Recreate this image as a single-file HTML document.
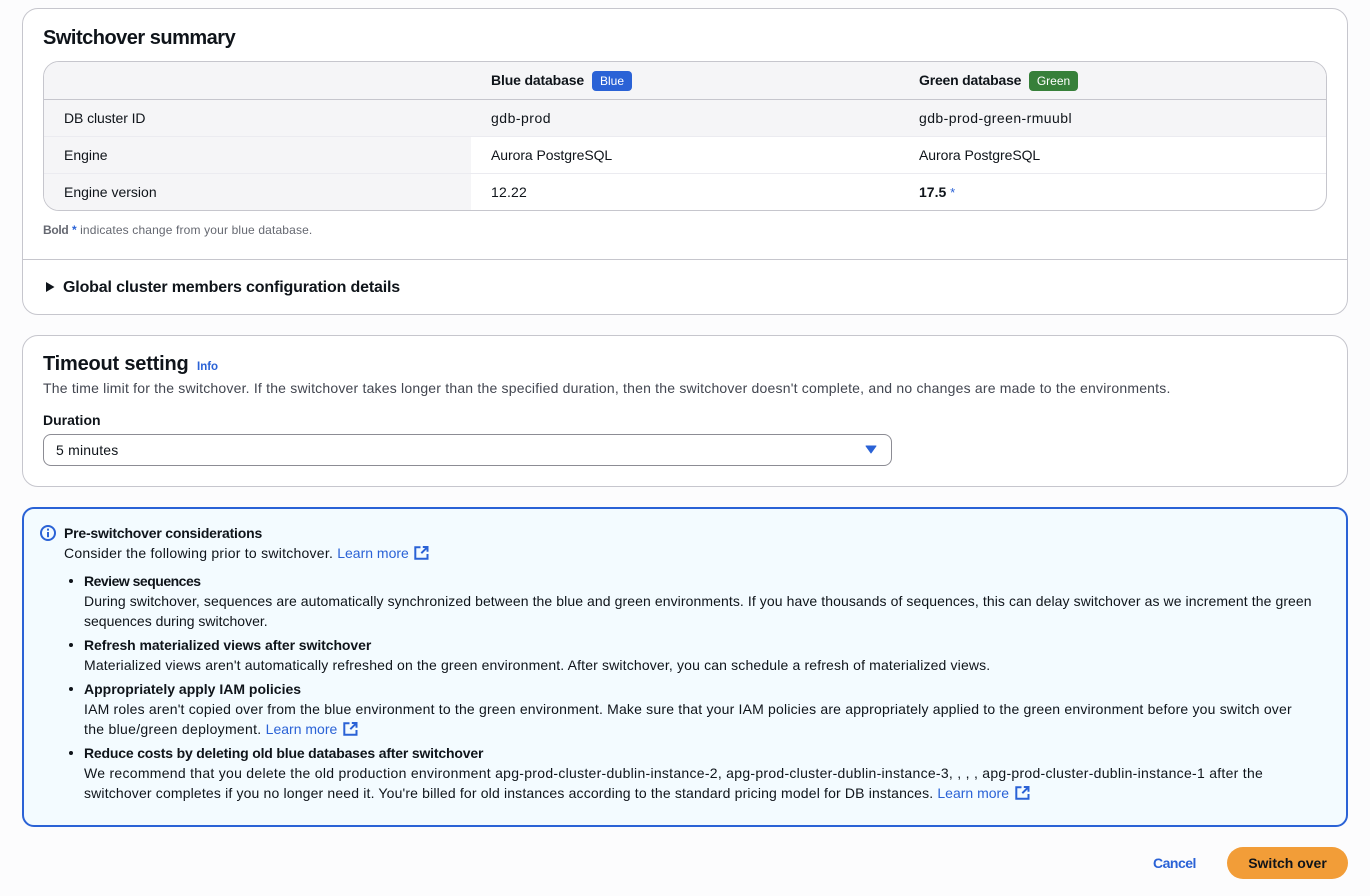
<!DOCTYPE html>
<html lang="en"><head><meta charset="utf-8"><title>Switchover</title>
<style>
html,body{margin:0;padding:0;width:1370px;height:896px;overflow:hidden;background:#fcfcfd}
body{position:relative;font-family:"Liberation Sans",sans-serif;font-size:14px;color:#0f141a}
.a{position:absolute}
.t{position:absolute;white-space:nowrap;line-height:20px}
b{font-weight:700}
.l{color:#2a62d6;letter-spacing:0}
.card{position:absolute;box-sizing:border-box;background:#fff;border:1px solid #c6c6cd;border-radius:16px}
.dot{position:absolute;width:4px;height:4px;border-radius:50%;background:#0f141a;left:69px}
svg{position:absolute}
</style></head><body>

<div class="card" style="left:22px;top:8px;width:1326px;height:307px"></div>
<div class="t" style="left:43px;top:26px;font-size:20px;line-height:24px;font-weight:700;letter-spacing:-.5px">Switchover summary</div>

<div class="a" style="left:43px;top:61px;width:1284px;height:150px;box-sizing:border-box;border:1px solid #c6c6cd;border-radius:16px;overflow:hidden;background:#fff">
  <div class="a" style="left:0;top:0;width:1283px;height:37px;background:#f5f5f7;border-bottom:1px solid #c6c6cd"></div>
  <div class="a" style="left:0;top:38px;width:1283px;height:36px;background:#f5f5f7;border-bottom:1px solid #ebebf0"></div>
  <div class="a" style="left:0;top:75px;width:427px;height:74px;background:#f5f5f7"></div>
  <div class="a" style="left:427px;top:111px;width:857px;height:1px;background:#ebebf0"></div>
  <div class="a" style="left:0;top:111px;width:427px;height:1px;background:#ebebf0"></div>
</div>

<div class="t" style="left:491px;top:70px;font-weight:700;letter-spacing:-.15px">Blue database</div>
<div class="a" style="left:592px;top:71px;width:40px;height:20px;border-radius:4px;background:#2a62d6;color:#fff;font-size:12px;line-height:20px;text-align:center;font-weight:400">Blue</div>
<div class="t" style="left:919px;top:70px;font-weight:700;letter-spacing:-.2px">Green database</div>
<div class="a" style="left:1029px;top:71px;width:49px;height:20px;border-radius:4px;background:#37803a;color:#fff;font-size:12px;line-height:20px;text-align:center">Green</div>

<div class="t" style="left:64px;top:108px;letter-spacing:-.08px">DB cluster ID</div>
<div class="t" style="left:491px;top:108px;letter-spacing:.5px">gdb-prod</div>
<div class="t" style="left:919px;top:108px;letter-spacing:.43px">gdb-prod-green-rmuubl</div>
<div class="t" style="left:64px;top:145px">Engine</div>
<div class="t" style="left:491px;top:145px;letter-spacing:-.06px">Aurora PostgreSQL</div>
<div class="t" style="left:919px;top:145px;letter-spacing:-.06px">Aurora PostgreSQL</div>
<div class="t" style="left:64px;top:182px">Engine version</div>
<div class="t" style="left:491px;top:182px;letter-spacing:.2px">12.22</div>
<div class="t" style="left:919px;top:182px"><b>17.5</b> <span class="l" style="font-size:13px">*</span></div>

<div class="t" style="left:43px;top:220px;font-size:12px;color:#656871;letter-spacing:.15px"><b style="letter-spacing:-.3px">Bold</b> <b class="l">*</b> indicates change from your blue database.</div>

<div class="a" style="left:23px;top:259px;width:1324px;height:1px;background:#c6c6cd"></div>
<svg style="left:46px;top:282px" width="9" height="10" viewBox="0 0 9 10"><path d="M0 0L8.5 5L0 10Z" fill="#0f141a"/></svg>
<div class="t" style="left:63px;top:278px;font-size:16px;font-weight:700;letter-spacing:-.16px">Global cluster members configuration details</div>

<div class="card" style="left:22px;top:335px;width:1326px;height:152px"></div>
<div class="t" style="left:43px;top:352px;font-size:20px;line-height:24px;font-weight:700;letter-spacing:-.2px">Timeout setting</div>
<div class="t" style="left:197px;top:357px;font-size:11.5px;font-weight:700;color:#2a62d6">Info</div>
<div class="t" style="left:43px;top:378px;color:#424650;letter-spacing:.2px">The time limit for the switchover. If the switchover takes longer than the specified duration, then the switchover doesn't complete, and no changes are made to the environments.</div>
<div class="t" style="left:43px;top:410px;font-weight:700">Duration</div>
<div class="a" style="left:43px;top:434px;width:849px;height:32px;box-sizing:border-box;border:1px solid #8c8c94;border-radius:8px;background:#fff"></div>
<div class="t" style="left:56px;top:440px;letter-spacing:.2px">5 minutes</div>
<svg style="left:865px;top:445px" width="12" height="9" viewBox="0 0 12 9"><path d="M1 1H11L6 8Z" fill="#2a62d6" stroke="#2a62d6" stroke-linejoin="round"/></svg>

<div class="a" style="left:22px;top:507px;width:1326px;height:320px;box-sizing:border-box;border:2px solid #2a62d6;border-radius:12px;background:#f3fbff"></div>
<svg style="left:40px;top:525px" width="16" height="16" viewBox="0 0 16 16" fill="none" stroke="#2a62d6" stroke-width="2"><circle cx="8" cy="8" r="7"/><path d="M8 7V12.2"/><path d="M8 3.6V5.6"/></svg>
<div class="t" style="left:64px;top:523px;font-weight:700;letter-spacing:-.2px">Pre-switchover considerations</div>
<div class="t" style="left:64px;top:543px;letter-spacing:.25px">Consider the following prior to switchover. <span class="l">Learn more</span></div>
<svg style="left:414px;top:546px" width="15" height="15" viewBox="0 0 15 15" fill="none" stroke="#2a62d6" stroke-width="2"><path d="M6.5 1.3H1.3V12.8H13.5V8M8.8 1H13.5V5.8M13.2 1.3L7.3 7.2"/></svg>

<div class="dot" style="top:579px"></div>
<div class="t" style="left:84px;top:571px;font-weight:700;letter-spacing:-.5px">Review sequences</div>
<div class="t" style="left:84px;top:591px;letter-spacing:.085px">During switchover, sequences are automatically synchronized between the blue and green environments. If you have thousands of sequences, this can delay switchover as we increment the green</div>
<div class="t" style="left:84px;top:611px">sequences during switchover.</div>

<div class="dot" style="top:643px"></div>
<div class="t" style="left:84px;top:635px;font-weight:700;letter-spacing:-.07px">Refresh materialized views after switchover</div>
<div class="t" style="left:84px;top:655px;letter-spacing:.154px">Materialized views aren't automatically refreshed on the green environment. After switchover, you can schedule a refresh of materialized views.</div>

<div class="dot" style="top:687px"></div>
<div class="t" style="left:84px;top:679px;font-weight:700">Appropriately apply IAM policies</div>
<div class="t" style="left:84px;top:699px;letter-spacing:.19px">IAM roles aren't copied over from the blue environment to the green environment. Make sure that your IAM policies are appropriately applied to the green environment before you switch over</div>
<div class="t" style="left:84px;top:719px;letter-spacing:.3px">the blue/green deployment. <span class="l">Learn more</span></div>
<svg style="left:343px;top:722px" width="15" height="15" viewBox="0 0 15 15" fill="none" stroke="#2a62d6" stroke-width="2"><path d="M6.5 1.3H1.3V12.8H13.5V8M8.8 1H13.5V5.8M13.2 1.3L7.3 7.2"/></svg>

<div class="dot" style="top:751px"></div>
<div class="t" style="left:84px;top:743px;font-weight:700;letter-spacing:-.18px">Reduce costs by deleting old blue databases after switchover</div>
<div class="t" style="left:84px;top:763px;letter-spacing:.28px">We recommend that you delete the old production environment apg-prod-cluster-dublin-instance-2, apg-prod-cluster-dublin-instance-3, , , , apg-prod-cluster-dublin-instance-1 after the</div>
<div class="t" style="left:84px;top:783px;letter-spacing:.16px">switchover completes if you no longer need it. You're billed for old instances according to the standard pricing model for DB instances. <span class="l">Learn more</span></div>
<svg style="left:1015px;top:786px" width="15" height="15" viewBox="0 0 15 15" fill="none" stroke="#2a62d6" stroke-width="2"><path d="M6.5 1.3H1.3V12.8H13.5V8M8.8 1H13.5V5.8M13.2 1.3L7.3 7.2"/></svg>

<div class="t" style="left:1153px;top:853px;font-weight:700;color:#2a62d6;letter-spacing:-.5px">Cancel</div>
<div class="a" style="left:1227px;top:847px;width:121px;height:32px;border-radius:16px;background:#f29d38;text-align:center;line-height:32px;font-weight:700;color:#0f141a">Switch over</div>
</body></html>
